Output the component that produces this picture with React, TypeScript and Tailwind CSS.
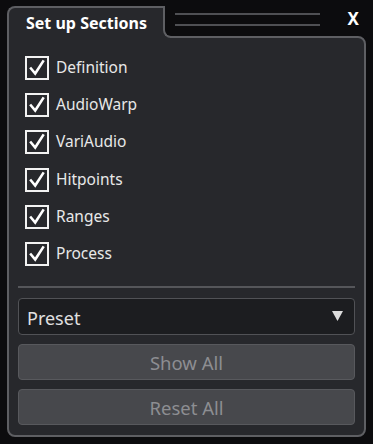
import React from 'react';

const sections = ['Definition', 'AudioWarp', 'VariAudio', 'Hitpoints', 'Ranges', 'Process'];

function CheckBox() {
  return (
    <div className="w-[24px] h-[24px] border-[2px] border-[#f2f2f2] flex items-center justify-center shrink-0">
      <svg width="18" height="18" viewBox="0 0 18 18">
        <path d="M3 9.5 L7.2 14.5 L15 2.5" fill="none" stroke="#ffffff" strokeWidth="2.6" strokeLinecap="square" />
      </svg>
    </div>
  );
}

export default function App() {
  return (
    <div
      className="w-[373px] h-[444px] bg-[#0c0c0e] pt-[6px] pl-[7px] overflow-hidden"
      style={{ fontFamily: '"Noto Sans", "Open Sans", sans-serif' }}
    >
      <div className="w-[359px] flex flex-col">
        <div className="relative h-[30px] flex">
          <div className="relative z-10 w-[163px] h-[32px] bg-[#27282c] border-l-2 border-t-2 border-[#5e5f63] rounded-tl-[8px] flex items-center pl-[17px]">
            <span className="text-white font-bold text-[16px] leading-none">Set up Sections</span>
          </div>
          <div className="absolute z-20 left-[156px] top-0 w-[10px] h-[32px] bg-[#0c0c0e] border-l-2 border-b-2 border-[#5e5f63] rounded-bl-[8px]" />
          <div className="absolute left-[168px] top-[7px] w-[145px] flex flex-col gap-[9px]">
            <div className="h-[2px] bg-[#4f5054]" />
            <div className="h-[2px] bg-[#4f5054]" />
          </div>
          <span className="absolute right-[7px] top-[4px] text-white font-bold text-[17px] leading-none">X</span>
        </div>

        <div className="h-[401px] bg-[#27282c] border-2 border-[#5e5f63] rounded-[8px] rounded-tl-none flex flex-col px-[9px] pt-[11px] pb-[10px]">
          <div className="flex flex-col pl-[7px]">
            {sections.map((s) => (
              <div key={s} className="h-[37.3px] flex items-center gap-[7px]">
                <CheckBox />
                <span className="text-[#e8e8e8] text-[15.5px] leading-none">{s}</span>
              </div>
            ))}
          </div>

          <div className="mt-[13px] h-[2px] bg-[#55565a]" />

          <div className="mt-[10px] h-[37px] bg-[#1c1d20] border border-[#515256] rounded-[4px] flex items-center justify-between pl-[8px] pr-[11px]">
            <span className="text-[#e0e0e0] text-[18px] leading-none pt-[3px]">Preset</span>
            <svg width="11" height="10" viewBox="0 0 11 10">
              <path d="M0 0 L11 0 L5.5 10 Z" fill="#dcdcdc" />
            </svg>
          </div>

          <div className="mt-[9px] h-[36px] bg-[#47484c] border border-[#58595d] rounded-[4px] flex items-center justify-center">
            <span className="text-[#8d8e92] text-[18.5px] leading-none pt-[2px]">Show All</span>
          </div>
          <div className="mt-[9px] h-[36px] bg-[#47484c] border border-[#58595d] rounded-[4px] flex items-center justify-center">
            <span className="text-[#8d8e92] text-[18.5px] leading-none pt-[2px]">Reset All</span>
          </div>
        </div>
      </div>
    </div>
  );
}
